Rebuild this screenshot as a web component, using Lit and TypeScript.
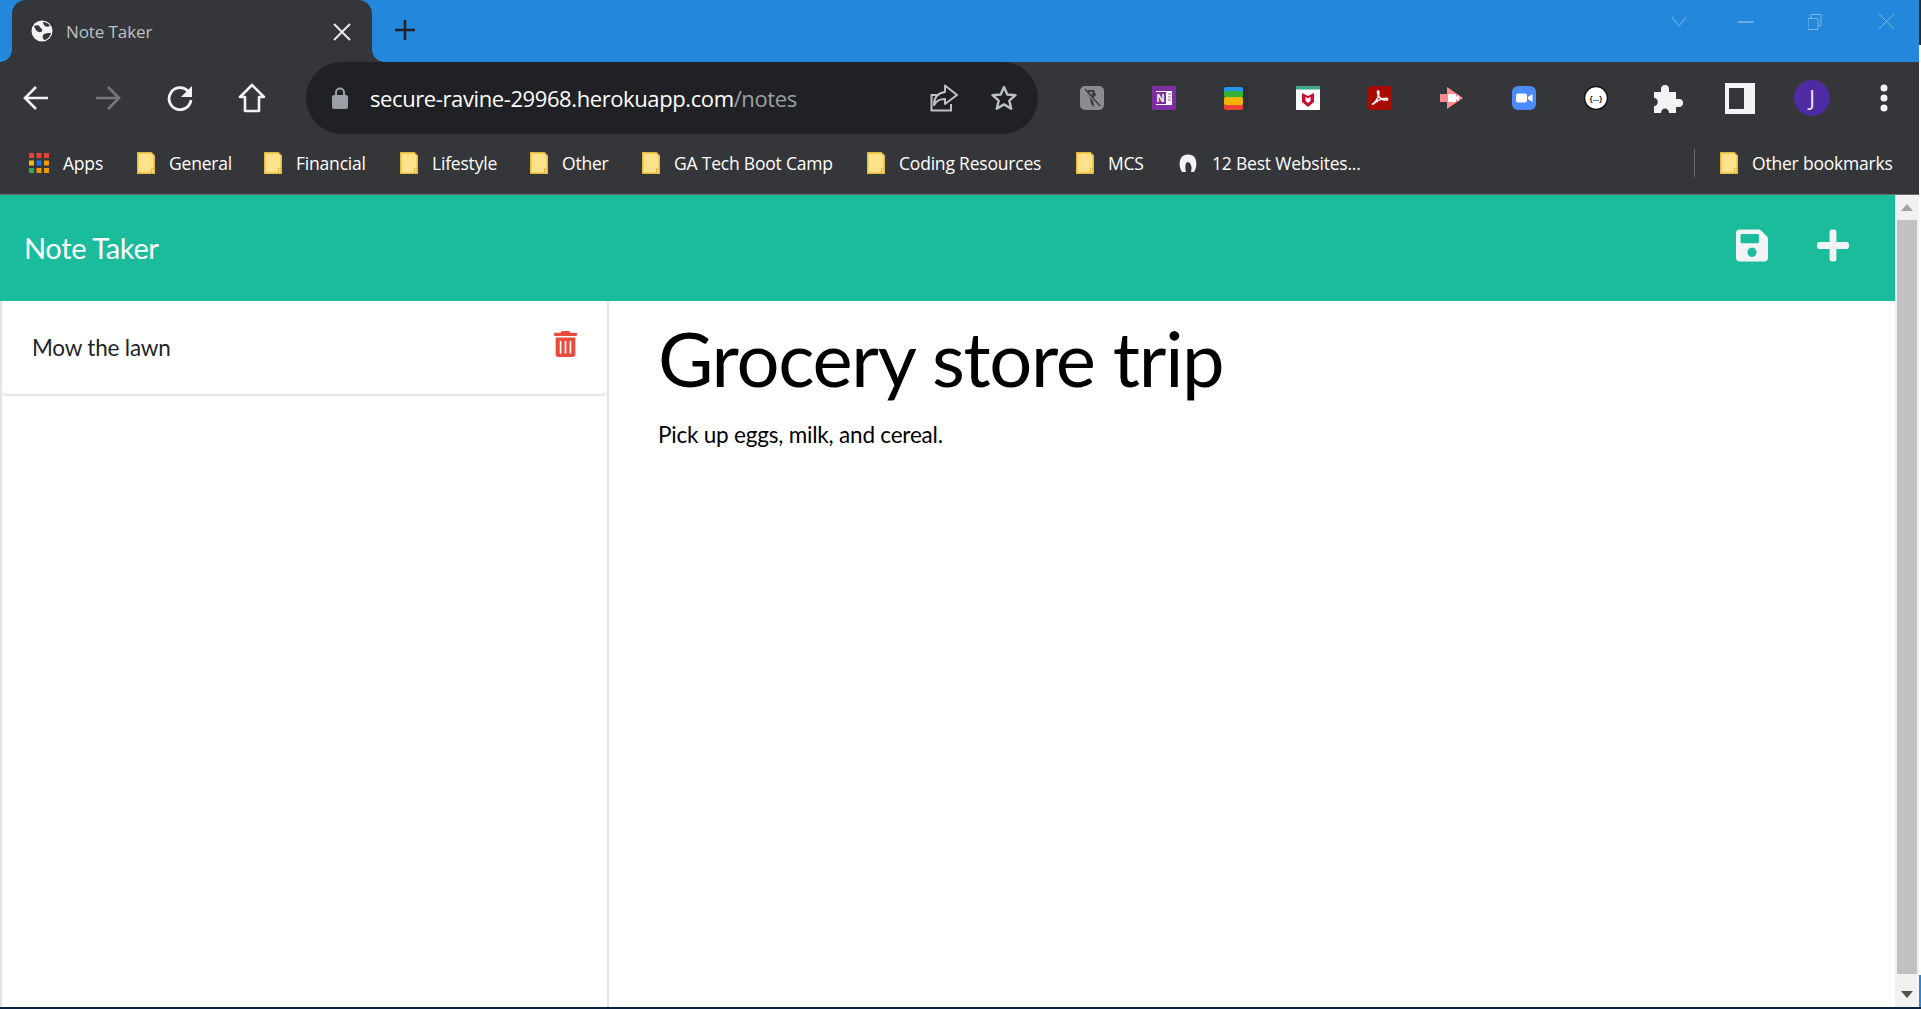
import { LitElement, html, css, svg } from "lit"
import { customElement } from "lit/decorators.js"

const bookmarks = [
  { label: "General", width: 127 },
  { label: "Financial", width: 136 },
  { label: "Lifestyle", width: 130 },
  { label: "Other", width: 112 },
  { label: "GA Tech Boot Camp", width: 225 },
  { label: "Coding Resources", width: 209 },
  { label: "MCS", width: 103 },
]

const folderIcon = svg`<svg width="18" height="22" viewBox="0 0 18 22">
  <path d="M.75.75h13.5l3 3v17.5H.75z" fill="#fde289" stroke="#e6b93f" stroke-width="1.5"/>
  <path d="M14.5 21v-3.500a1.200 1.200 0 0 1 2.500 0V21" fill="#fde289" stroke="#e6b93f" stroke-width="1.2"/>
</svg>`

const extensions = [
  svg`<rect width="24" height="24" rx="5" fill="#8b8c8e"/>
    <path d="M8 4h6l2 5-3 3 1 9-3-3-1-6-3-4z" fill="#3a3b3f"/>
    <circle cx="11" cy="7" r="1.6" fill="#8b8c8e"/>
    <path d="M5 4l15 17" stroke="#8b8c8e" stroke-width="2.4"/>
    <path d="M5 3l15 17" stroke="#35363a" stroke-width="1.2"/>`,
  svg`<rect width="24" height="24" fill="#7d2fa0"/>
    <rect x="4" y="5" width="16" height="14" fill="#fff"/>
    <rect x="3" y="6" width="11" height="12" fill="#7d2fa0"/>
    <path d="M16 8h3M16 11h3M16 14h3" stroke="#b58ccb" stroke-width="1.4"/>
    <text x="8.5" y="15.5" text-anchor="middle" class="ext-text" fill="#fff">N</text>`,
  svg`<rect x="0" y="0" width="24" height="24" rx="3" fill="#303134"/>
    <rect x="0" y="1" width="19" height="8" rx="2" fill="#2196f3"/>
    <rect x="0" y="17" width="19" height="7" rx="2" fill="#ea4335"/>
    <rect x="0" y="5" width="19" height="7" rx="2" fill="#34b233"/>
    <rect x="0" y="11" width="19" height="8" rx="2" fill="#f4b400"/>`,
  svg`<rect width="24" height="24" rx="1" fill="#fff"/>
    <rect width="24" height="3.5" fill="#3fa887"/>
    <path d="M6 7l6 3 6-3v9l-6 5-6-5z" fill="#c8102e"/>
    <path d="M9.5 11l2.5 1.200 2.500-1.200v4l-2.500 2-2.500-2z" fill="#fff"/>`,
  svg`<rect width="24" height="24" rx="3" fill="#a80b00"/>
    <path d="M4.5 18c3-1 7-8 6.500-12-.3-2-2-1-1.500 1 .8 4 4 7 9 7 2 0 1.500-2-.5-1.800-4 .3-8 2-11 4.500-1.500 1.200-3 1.800-2.500 1.300z" fill="none" stroke="#fff" stroke-width="1.5"/>`,
  svg`<path d="M7 8V1l16 11L7 23v-7H0V8z" fill="#ff8a8f"/>
    <rect x="8" y="8" width="8" height="8" rx="1" fill="#fff"/>
    <path d="M16 11l3-2v6l-3-2z" fill="#fff"/>`,
  svg`<rect width="24" height="24" rx="6" fill="#4a8cff"/>
    <rect x="4" y="7.5" width="11" height="9" rx="2" fill="#fff"/>
    <path d="M16 11l4.500-3v8L16 13z" fill="#fff"/>`,
  svg`<circle cx="12" cy="12" r="11.5" fill="#fff" stroke="#111" stroke-width="1.5"/>
    <text x="12" y="15" text-anchor="middle" class="ext-text small" fill="#222">{...}</text>`,
]

@customElement("app-root")
export class AppRoot extends LitElement {
  static styles = css`
    :host {
      display: block;
      width: 1921px;
      height: 1009px;
      overflow: hidden;
      background: #0d2440;
    }

    .desktop {
      display: flex;
      height: 1007px;
    }

    .window {
      width: 1919px;
      display: flex;
      flex-direction: column;
      background: #fff;
      font-family: "Open Sans", "Noto Sans", sans-serif;
    }

    .edge {
      width: 2px;
      display: flex;
      flex-direction: column;
      background: #fff;
    }
    .edge .dark { height: 45px; background: #2b2b2b; }
    .edge .light { flex: 1; background: #fff; }
    .edge .blue { height: 32px; background: #2387dc; }

    /* tab strip */
    .tabstrip {
      height: 62px;
      display: flex;
      background: #2387dc;
      padding-left: 12px;
      position: relative;
    }
    .tab {
      width: 360px;
      display: flex;
      align-items: center;
      background: #35363a;
      border-radius: 14px 14px 0 0;
      padding: 0 20px 0 19px;
      box-sizing: border-box;
      position: relative;
    }
    .tab::before, .tab::after {
      content: "";
      position: absolute;
      bottom: 0;
      width: 12px;
      height: 12px;
      background: radial-gradient(circle at 0 0, #2387dc 11.5px, #35363a 12px);
    }
    .tab::before {
      left: -12px;
    }
    .tab::after {
      right: -12px;
      background: radial-gradient(circle at 100% 0, #2387dc 11.5px, #35363a 12px);
    }
    .tab-title {
      flex: 1;
      margin-left: 13px;
      color: #bdc1c6;
      font-size: 17px;
      letter-spacing: -0.1px;
    }
    .tab-close { display: block; margin-top: 1px; }
    .new-tab { margin: 19px 0 0 21.5px; display: block; }
    .window-controls {
      position: absolute;
      top: 14px;
      left: 1667px;
      display: flex;
      gap: 46.5px;
    }

    /* toolbar */
    .toolbar {
      height: 72px;
      display: flex;
      background: #35363a;
    }
    .tool {
      width: 72px;
      height: 72px;
      display: flex;
      align-items: center;
      justify-content: center;
      flex: none;
    }
    .omnibox {
      width: 732px;
      margin: 0 18px;
      flex: none;
      display: flex;
      align-items: center;
      background: #202124;
      border-radius: 36px;
      padding: 0 20px 0 26px;
      box-sizing: border-box;
    }
    .url {
      flex: 1;
      margin-left: 22px;
      font-size: 22px;
      letter-spacing: -0.4px;
      color: #fff;
      white-space: nowrap;
    }
    .url span { color: #9aa0a6; }
    .omni-icons { display: flex; gap: 32px; align-items: center; }
    .ext-text {
      font-family: "Liberation Sans", sans-serif;
      font-size: 11px;
      font-weight: 700;
    }
    .ext-text.small { font-size: 8px; }
    .avatar {
      width: 36px;
      height: 36px;
      border-radius: 50%;
      background: #4f2ba3;
      color: #f0eaff;
      font-size: 21px;
      display: flex;
      align-items: center;
      justify-content: center;
    }

    /* bookmarks */
    .bookmarks {
      height: 61px;
      padding: 0 0 2px 29px;
      display: flex;
      align-items: center;
      background: #35363a;
      border-bottom: 1px solid #6b6c70;
      box-sizing: border-box;
      color: #fff;
      font-size: 17.5px;
      letter-spacing: -0.2px;
    }
    .mark {
      display: flex;
      align-items: center;
      gap: 14px;
      flex: none;
      white-space: nowrap;
    }
    .mark.apps { width: 108px; }
    .mark.best { width: 515px; gap: 15px; }
    .divider {
      width: 1px;
      height: 28px;
      background: #6b6c70;
      margin-right: 25px;
    }

    /* note taker page */
    .page {
      flex: 1;
      min-height: 0;
      display: flex;
    }
    .app {
      flex: 1;
      display: flex;
      flex-direction: column;
      font-family: Lato, sans-serif;
    }
    .navbar {
      height: 106px;
      background: #1abc9c;
      display: flex;
      align-items: center;
      padding: 0 46px 0 24px;
      box-sizing: border-box;
      color: #fff;
    }
    .navbar h2 {
      flex: 1;
      margin: 0 0 1px;
      font-size: 29px;
      font-weight: 400;
      letter-spacing: -0.35px;
    }
    .nav-icons {
      display: flex;
      gap: 49px;
      margin-bottom: 6px;
      color: #f1f3f4;
    }
    .nav-icons svg { display: block; width: 32px; height: 37px; }
    .columns {
      flex: 1;
      display: flex;
      min-height: 0;
    }
    .sidebar {
      width: 609px;
      box-sizing: border-box;
      border-left: 2px solid #e4e4e4;
      border-right: 2px solid #e4e4e4;
      flex: none;
    }
    .note-item {
      height: 95px;
      box-sizing: border-box;
      display: flex;
      align-items: center;
      justify-content: space-between;
      padding: 0 30px 0 30px;
      border-bottom: 2px solid #e4e4e4;
      border-radius: 0 0 5px 5px;
      font-size: 22.5px;
      letter-spacing: -0.2px;
      color: #212529;
    }
    .note-item svg { display: block; width: 23px; height: 26px; color: #e74c3c; margin-top: -8px; }
    .note {
      flex: 1;
      padding: 0 0 0 49px;
    }
    .note h1 {
      margin: 10px 0 0;
      font-size: 76px;
      line-height: 94px;
      font-weight: 400;
      letter-spacing: -1.3px;
      color: #000;
    }
    .note p {
      margin: 16px 0 0;
      font-size: 22.5px;
      letter-spacing: -0.2px;
      color: #000;
    }

    /* scrollbar */
    .scrollbar {
      width: 24px;
      flex: none;
      display: flex;
      flex-direction: column;
      align-items: center;
      background: #f1f1f1;
    }
    .arrow {
      height: 25px;
      display: flex;
      align-items: center;
      justify-content: center;
      flex: none;
    }
    .thumb {
      width: 20px;
      flex: 1;
      background: #c1c1c1;
      margin-bottom: 8px;
    }
  `

  renderExtension(icon: unknown) {
    return html`<div class="tool"><svg width="24" height="24" viewBox="0 0 24 24">${icon}</svg></div>`
  }

  render() {
    return html`
      <div class="desktop">
        <div class="window">
          <div class="tabstrip">
            <div class="tab">
              <svg width="22" height="22" viewBox="0 0 22 22">
                <circle cx="11" cy="11" r="10.5" fill="#f1f3f4"/>
                <path d="M3 6c3-1 5-1 6 1s3 2 2 4-4 1-5 0-2-2-3-5zM12 15c2-2 5-2 8-2-1 4-4 7-7 7-1-2-2-3-1-5zM12 2c3 0 5 1 7 4-2 1-4 1-5 0s-2-2-2-4z" fill="#35363a"/>
              </svg>
              <span class="tab-title">Note Taker</span>
              <svg class="tab-close" width="20" height="20" viewBox="0 0 20 20">
                <path d="M2 2l16 16M18 2L2 18" stroke="#e8eaed" stroke-width="2"/>
              </svg>
            </div>
            <svg class="new-tab" width="22" height="22" viewBox="0 0 22 22">
              <path d="M11 1v20M1 11h20" stroke="#202124" stroke-width="2.5"/>
            </svg>
            <div class="window-controls">
              <svg width="24" height="16" viewBox="0 0 24 16"><path d="M5 3l7 9 7-9" stroke="#7db7ea" stroke-width="1" fill="none"/></svg>
              <svg width="24" height="16" viewBox="0 0 24 16"><path d="M0 8h16" stroke="#9cc8ef" stroke-width="1.2"/></svg>
              <svg width="24" height="16" viewBox="0 0 24 16"><path d="M0 4.5h10v11H0zM3 4V.5h10v11h-3" stroke="#7db7ea" stroke-width="1" fill="none"/></svg>
              <svg width="24" height="16" viewBox="0 0 24 16"><path d="M0 0l15 15M15 0L0 15" stroke="#7db7ea" stroke-width="1" fill="none"/></svg>
            </div>
          </div>

          <div class="toolbar">
            <div class="tool"><svg width="26" height="26" viewBox="0 0 26 26"><path d="M25 13H3M13 2L2 13l11 11" stroke="#f1f3f4" stroke-width="2.6" fill="none"/></svg></div>
            <div class="tool"><svg width="26" height="26" viewBox="0 0 26 26"><path d="M1 13h22M13 2l11 11-11 11" stroke="#77787b" stroke-width="2.6" fill="none"/></svg></div>
            <div class="tool"><svg width="26" height="26" viewBox="0 0 26 26"><path d="M21 6a11 11 0 1 0 3 9" stroke="#f1f3f4" stroke-width="2.8" fill="none"/><path d="M25 1v11H14z" fill="#f1f3f4"/></svg></div>
            <div class="tool"><svg width="28" height="30" viewBox="0 0 28 30"><path d="M14 2L2 14h5v14h14V14h5z" stroke="#f1f3f4" stroke-width="2.6" fill="none" stroke-linejoin="round"/></svg></div>
            <div class="omnibox">
              <svg width="16" height="22" viewBox="0 0 16 22">
                <rect y="8" width="16" height="14" rx="2" fill="#9aa0a6"/>
                <path d="M4 9V5.500a4 4 0 0 1 8 0V9" stroke="#9aa0a6" stroke-width="2" fill="none"/>
              </svg>
              <div class="url">secure-ravine-29968.herokuapp.com<span>/notes</span></div>
              <div class="omni-icons">
                <svg width="28" height="28" viewBox="0 0 28 28" fill="none" stroke="#bdc1c6" stroke-width="2">
                  <path d="M15 1.5l12 9.500-12 9v-5c-5 0-8 1-11 6 0-8 4-12 11-13z" stroke-linejoin="round"/>
                  <path d="M21 20v6.500H1.500V11H8"/>
                </svg>
                <svg width="28" height="28" viewBox="0 0 28 28"><path d="M14 3l3.300 7.500 8.200.7-6.200 5.400 1.900 8.100L14 20.400l-7.200 4.300 1.900-8.100-6.200-5.400 8.200-.7z" stroke="#bdc1c6" stroke-width="2.4" fill="none" stroke-linejoin="round"/></svg>
              </div>
            </div>
            ${extensions.map((icon) => this.renderExtension(icon))}
            <div class="tool"><svg width="32" height="32" viewBox="0 0 32 32"><path d="M2 10h7V7a4 4 0 0 1 8 0v3h7v7h3a4 4 0 0 1 0 8h-3v6h-7c0-6-8-6-8 0H2v-7c5 0 5-8 0-8z" fill="#f1f3f4"/></svg></div>
            <div class="tool"><svg width="30" height="31" viewBox="0 0 30 31"><path d="M0 0h30v31H0zM4 5v21h15V5z" fill="#f1f3f4" fill-rule="evenodd"/></svg></div>
            <div class="tool"><div class="avatar">J</div></div>
            <div class="tool"><svg width="8" height="28" viewBox="0 0 8 28"><circle cx="4" cy="4" r="3.5" fill="#f1f3f4"/><circle cx="4" cy="14" r="3.5" fill="#f1f3f4"/><circle cx="4" cy="24" r="3.5" fill="#f1f3f4"/></svg></div>
          </div>

          <div class="bookmarks">
            <div class="mark apps">
              <svg width="20" height="20" viewBox="0 0 20 20">
                <path d="M0 0h5v5H0z" fill="#ea4335"/><path d="M7.5 0h5v5h-5z" fill="#ea4335"/><path d="M15 0h5v5h-5z" fill="#ea4335"/>
                <path d="M0 7.5h5v5H0z" fill="#fbbc04"/><path d="M7.5 7.5h5v5h-5z" fill="#1a73e8"/><path d="M15 7.5h5v5h-5z" fill="#f29900"/>
                <path d="M0 15h5v5H0z" fill="#34a853"/><path d="M7.5 15h5v5h-5z" fill="#f29900"/><path d="M15 15h5v5h-5z" fill="#f29900"/>
              </svg>
              <span>Apps</span>
            </div>
            ${bookmarks.map((b) => html`<div class="mark" style="width:${b.width}px">${folderIcon}<span>${b.label}</span></div>`)}
            <div class="mark best">
              <svg width="18" height="20" viewBox="0 0 18 20">
                <path d="M3 19C0 14 0 9 2 5c2-4 11-5 14 0 2 4 2 9-1 14h-3c1-4 1-8-3-10-3 0-3 6-2 10z" fill="#f1f3f4"/>
              </svg>
              <span>12 Best Websites...</span>
            </div>
            <div class="divider"></div>
            <div class="mark">${folderIcon}<span>Other bookmarks</span></div>
          </div>

          <div class="page">
            <div class="app">
              <div class="navbar">
                <h2>Note Taker</h2>
                <div class="nav-icons">
                  <svg viewBox="0 0 448 512" fill="currentColor"><path d="M433.941 129.941l-83.882-83.882A48 48 0 0 0 316.118 32H48C21.490 32 0 53.490 0 80v352c0 26.510 21.490 48 48 48h352c26.510 0 48-21.490 48-48V163.882a48 48 0 0 0-14.059-33.941zM224 416c-35.346 0-64-28.654-64-64 0-35.346 28.654-64 64-64s64 28.654 64 64c0 35.346-28.654 64-64 64zm96-304.520V212c0 6.627-5.373 12-12 12H76c-6.627 0-12-5.373-12-12V108c0-6.627 5.373-12 12-12h228.520c3.183 0 6.235 1.264 8.485 3.515l3.480 3.480A11.996 11.996 0 0 1 320 111.480z"/></svg>
                  <svg viewBox="0 0 448 512" fill="currentColor"><path d="M416 208H272V64c0-17.670-14.330-32-32-32h-32c-17.670 0-32 14.330-32 32v144H32c-17.670 0-32 14.330-32 32v32c0 17.670 14.330 32 32 32h144v144c0 17.670 14.330 32 32 32h32c17.670 0 32-14.330 32-32V304h144c17.670 0 32-14.330 32-32v-32c0-17.670-14.330-32-32-32z"/></svg>
                </div>
              </div>
              <div class="columns">
                <div class="sidebar">
                  <div class="note-item">
                    <span>Mow the lawn</span>
                    <svg viewBox="0 0 448 512" fill="currentColor" preserveAspectRatio="none"><path d="M32 464a48 48 0 0 0 48 48h288a48 48 0 0 0 48-48V128H32zm272-256a16 16 0 0 1 32 0v224a16 16 0 0 1-32 0zm-96 0a16 16 0 0 1 32 0v224a16 16 0 0 1-32 0zm-96 0a16 16 0 0 1 32 0v224a16 16 0 0 1-32 0zM432 32H312l-3.200-18.700A24 24 0 0 0 287.300 0H160.600a23.700 23.700 0 0 0-21.400 13.300L128 32H16A16 16 0 0 0 0 48v32a16 16 0 0 0 16 16h416a16 16 0 0 0 16-16V48a16 16 0 0 0-16-16z"/></svg>
                  </div>
                </div>
                <div class="note">
                  <h1>Grocery store trip</h1>
                  <p>Pick up eggs, milk, and cereal.</p>
                </div>
              </div>
            </div>
            <div class="scrollbar">
              <div class="arrow"><svg width="12" height="7" viewBox="0 0 12 7"><path d="M6 0l6 7H0z" fill="#a3a3a3"/></svg></div>
              <div class="thumb"></div>
              <div class="arrow"><svg width="12" height="7" viewBox="0 0 12 7"><path d="M0 0h12L6 7z" fill="#505050"/></svg></div>
            </div>
          </div>
        </div>
        <div class="edge">
          <div class="dark"></div>
          <div class="light"></div>
          <div class="blue"></div>
        </div>
      </div>
    `
  }
}
